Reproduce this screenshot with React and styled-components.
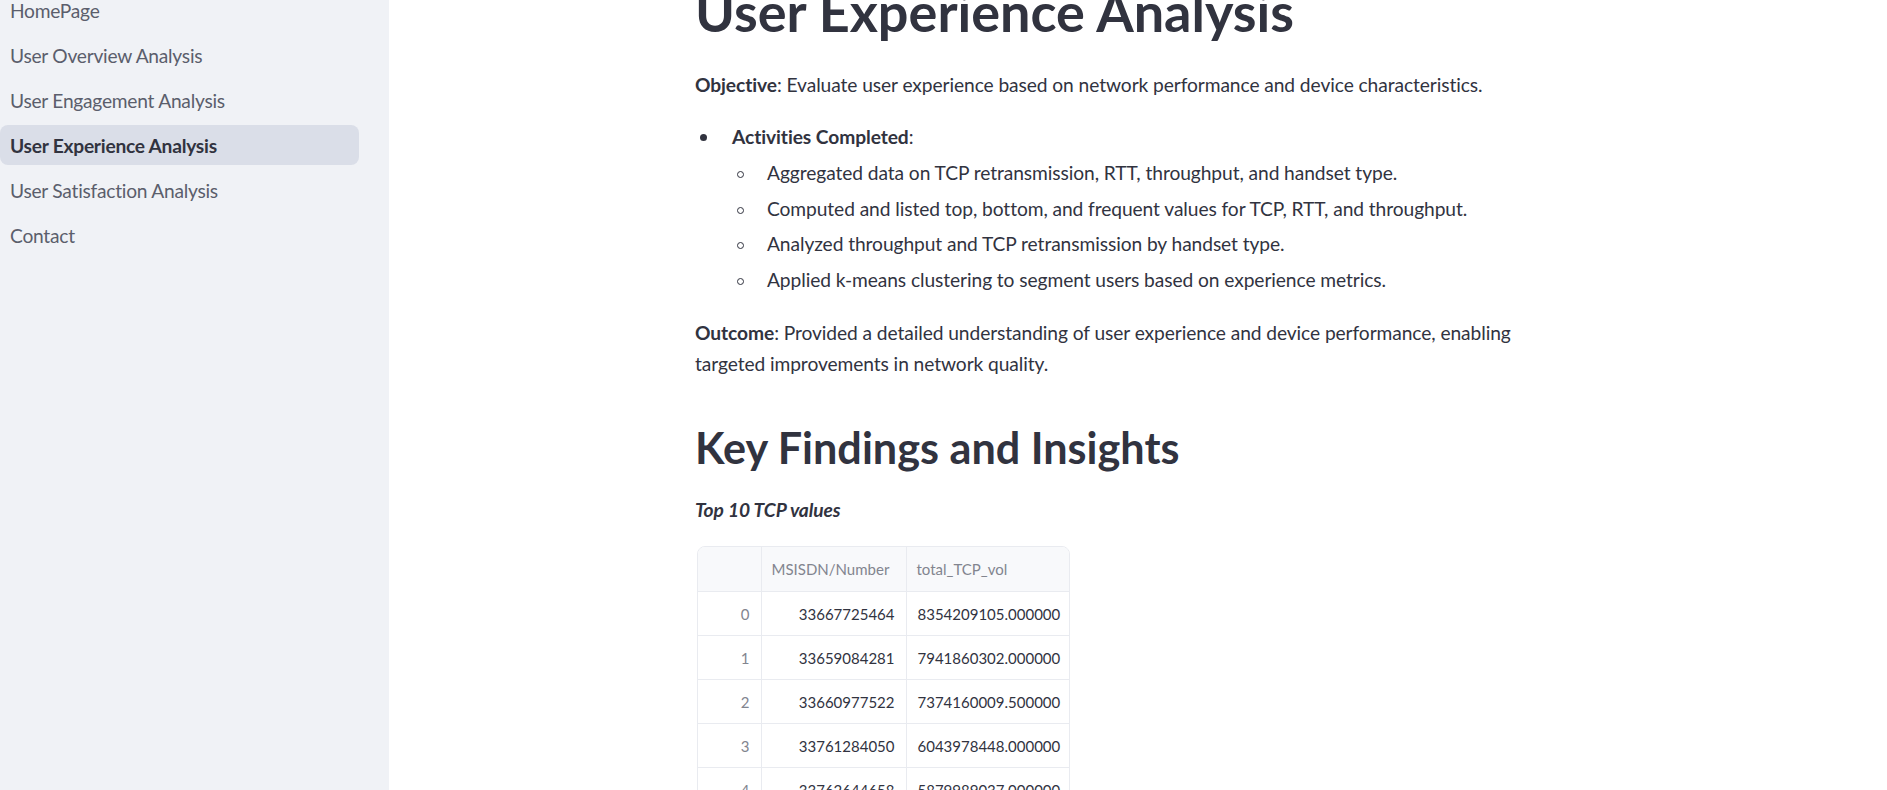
import styled, { createGlobalStyle } from 'styled-components';

const navItems = [
  'HomePage',
  'User Overview Analysis',
  'User Engagement Analysis',
  'User Experience Analysis',
  'User Satisfaction Analysis',
  'Contact',
];

const activities = [
  'Aggregated data on TCP retransmission, RTT, throughput, and handset type.',
  'Computed and listed top, bottom, and frequent values for TCP, RTT, and throughput.',
  'Analyzed throughput and TCP retransmission by handset type.',
  'Applied k-means clustering to segment users based on experience metrics.',
];

const tcpRows = [
  ['33667725464', '8354209105.000000'],
  ['33659084281', '7941860302.000000'],
  ['33660977522', '7374160009.500000'],
  ['33761284050', '6043978448.000000'],
  ['33762644658', '5879989037.000000'],
];

export default function App() {
  return (
    <>
      <GlobalStyle />
      <Page>
        {/* sidebar navigation */}
        <Sidebar>
          <NavList>
            {navItems.map(function (item) {
              return (
                <NavItem key={item} $active={item === 'User Experience Analysis'}>
                  {item}
                </NavItem>
              );
            })}
          </NavList>
        </Sidebar>

        {/* main content */}
        <Main>
          <Content>
            <Title>User Experience Analysis</Title>
            <Paragraph>
              <b>Objective</b>: Evaluate user experience based on network performance and device characteristics.
            </Paragraph>

            <BulletList>
              <li>
                <BulletRow>
                  <Bullet />
                  <span><b>Activities Completed</b>:</span>
                </BulletRow>
                <SubList>
                  {activities.map(function (text) {
                    return (
                      <li key={text}>
                        <BulletRow $sub>
                          <Bullet $hollow />
                          <span>{text}</span>
                        </BulletRow>
                      </li>
                    );
                  })}
                </SubList>
              </li>
            </BulletList>

            <Paragraph $gap={21}>
              <b>Outcome</b>: Provided a detailed understanding of user experience and device performance, enabling targeted improvements in network quality.
            </Paragraph>

            <SectionTitle>Key Findings and Insights</SectionTitle>
            <Caption>Top 10 TCP values</Caption>

            <TableWrapper>
              <Table>
                <colgroup>
                  <col style={{ width: 63 }} />
                  <col style={{ width: 145 }} />
                  <col style={{ width: 163 }} />
                </colgroup>
                <thead>
                  <tr>
                    <HeadCell />
                    <HeadCell>MSISDN/Number</HeadCell>
                    <HeadCell>total_TCP_vol</HeadCell>
                  </tr>
                </thead>
                <tbody>
                  {tcpRows.map(function (row, i) {
                    return (
                      <tr key={i}>
                        <Cell $index>{i}</Cell>
                        <Cell>{row[0]}</Cell>
                        <Cell>{row[1]}</Cell>
                      </tr>
                    );
                  })}
                </tbody>
              </Table>
            </TableWrapper>
          </Content>
        </Main>
      </Page>
    </>
  );
}

const GlobalStyle = createGlobalStyle`
  body {
    margin: 0;
    background: #ffffff;
    font-family: Lato, "Liberation Sans", sans-serif;
    color: #31333f;
  }
`;

const Page = styled.div`
  display: flex;
  height: 790px;
  overflow: hidden;
`;

const Sidebar = styled.aside`
  flex: none;
  width: 389px;
  background-color: #f0f2f6;
`;

const NavList = styled.nav`
  display: flex;
  flex-direction: column;
  gap: 5px;
  margin-top: -10px;
  padding-right: 30px;
`;

const NavItem = styled.div`
  height: 40px;
  display: flex;
  align-items: center;
  padding-left: 10px;
  border-radius: 8px;
  font-size: 19.2px;
  letter-spacing: -0.25px;
  color: ${(p) => (p.$active ? '#31333f' : '#5b5e6c')};
  font-weight: ${(p) => (p.$active ? 700 : 400)};
  background-color: ${(p) => (p.$active ? '#dadee8' : 'transparent')};
`;

const Main = styled.main`
  flex: 1;
  display: flex;
  justify-content: center;
`;

const Content = styled.div`
  width: 886px;
  font-size: 19.2px;
  line-height: 31.6px;
  letter-spacing: -0.08px;

  b {
    font-weight: 700;
  }
`;

const Title = styled.h1`
  margin: -20px 0 0;
  font-size: 54px;
  line-height: 64px;
  font-weight: 700;
  letter-spacing: 0;
`;

const Paragraph = styled.p`
  margin: ${(p) => p.$gap || 25}px 0 0;
`;

const BulletList = styled.ul`
  list-style: none;
  margin: 20px 0 0;
  padding: 0;
`;

const SubList = styled.ul`
  list-style: none;
  margin: 5px 0 0;
  padding: 0;
  display: flex;
  flex-direction: column;
  gap: 4px;
`;

const BulletRow = styled.div`
  display: flex;
  align-items: center;
  padding-left: ${(p) => (p.$sub ? 42 : 5)}px;
  gap: ${(p) => (p.$sub ? 23 : 25)}px;
`;

const Bullet = styled.span`
  flex: none;
  width: ${(p) => (p.$hollow ? 5 : 7)}px;
  height: ${(p) => (p.$hollow ? 5 : 7)}px;
  margin-top: 3px;
  border-radius: 50%;
  border: ${(p) => (p.$hollow ? '1px solid #31333f' : 'none')};
  background-color: ${(p) => (p.$hollow ? 'transparent' : '#31333f')};
`;

const SectionTitle = styled.h2`
  margin: 41px 0 0;
  font-size: 43.2px;
  line-height: 52px;
  font-weight: 700;
  letter-spacing: 0;
`;

const Caption = styled.p`
  margin: 21px 0 0;
  font-style: italic;
  font-weight: 700;
`;

const TableWrapper = styled.div`
  margin: 21px 0 0 2px;
  width: 371px;
  border: 1px solid #e9ebf0;
  border-radius: 8px;
  overflow: hidden;
  letter-spacing: 0;
`;

const Table = styled.table`
  width: 100%;
  table-layout: fixed;
  border-collapse: collapse;
  font-size: 15px;
  line-height: 20px;
`;

const HeadCell = styled.th`
  height: 44px;
  padding: 0 10px;
  text-align: left;
  font-weight: 400;
  color: #82858f;
  background-color: #f8f9fb;
  border-left: 1px solid #e9ebf0;
  border-bottom: 1px solid #e9ebf0;

  &:first-child {
    border-left: none;
  }
`;

const Cell = styled.td`
  height: 43px;
  padding: 0 11px;
  text-align: right;
  white-space: nowrap;
  color: ${(p) => (p.$index ? '#82858f' : '#31333f')};
  border-left: ${(p) => (p.$index ? 'none' : '1px solid #e9ebf0')};
  border-bottom: 1px solid #e9ebf0;
`;
